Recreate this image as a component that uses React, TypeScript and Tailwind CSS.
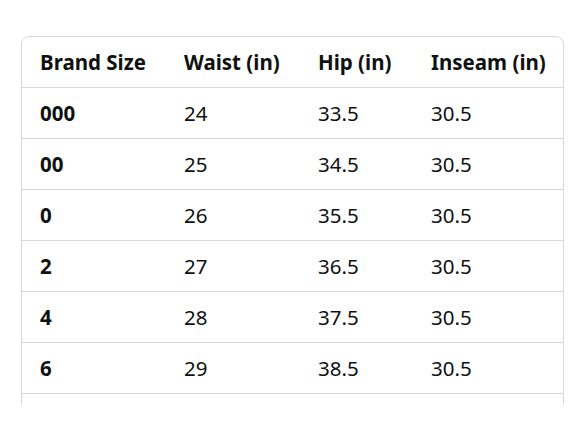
import React from 'react';

const headers = ['Brand Size', 'Waist (in)', 'Hip (in)', 'Inseam (in)'];

const rows: [string, string, string, string][] = [
  ['000', '24', '33.5', '30.5'],
  ['00', '25', '34.5', '30.5'],
  ['0', '26', '35.5', '30.5'],
  ['2', '27', '36.5', '30.5'],
  ['4', '28', '37.5', '30.5'],
  ['6', '29', '38.5', '30.5'],
];

const grid = 'grid grid-cols-[144px_134px_113px_1fr]';

export default function App() {
  return (
    <div
      className="w-[588px] h-[441px] bg-white pt-[36px] pl-[21px] text-[#0f1111]"
      style={{ fontFamily: '"Noto Sans", "Open Sans", sans-serif' }}
    >
      {/* size chart, clipped at the bottom like a scroll area */}
      <div className="w-[543px] h-[369px] overflow-hidden">
        <div className="border border-[#d5d9d9] rounded-t-lg">
          <div className={`${grid} h-[51px] items-center border-b border-[#d5d9d9]`}>
            {headers.map((h) => (
              <div key={h} className="pl-[18px] text-[20.5px] font-bold">
                {h}
              </div>
            ))}
          </div>
          {rows.map((r) => (
            <div key={r[0]} className={`${grid} h-[51px] items-center border-b border-[#d5d9d9]`}>
              {r.map((c, i) => (
                <div key={i} className={`pl-[18px] text-[20.5px] ${i === 0 ? 'font-bold' : 'font-normal'}`}>
                  {c}
                </div>
              ))}
            </div>
          ))}
          {/* next row, scrolled out of view */}
          <div className="h-[51px]" />
        </div>
      </div>
    </div>
  );
}
